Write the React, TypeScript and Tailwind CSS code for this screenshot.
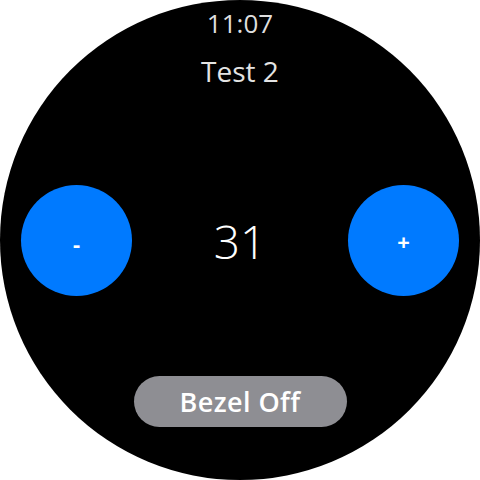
export default function App() {
  const font = { fontFamily: '"Open Sans", "Noto Sans", sans-serif' };

  return (
    <div className="w-[480px] h-[480px] bg-white" style={font}>
      <div className="w-[480px] h-[480px] rounded-full bg-black flex flex-col items-center">
        <div className="pt-[10px] text-[26px] leading-none text-[#dedede]">11:07</div>
        <div className="mt-[21px] text-[28px] leading-none text-[#e4e4e4]">Test 2</div>

        <div className="mt-[100px] w-full px-[21px] flex items-center justify-between">
          <button
            type="button"
            className="w-[111px] h-[111px] rounded-full bg-[#007aff] flex items-center justify-center text-white text-[22px] font-bold leading-none"
          >
            <span className="pt-[4px]">-</span>
          </button>
          <div className="text-[46px] font-light leading-none text-white">31</div>
          <button
            type="button"
            className="w-[111px] h-[111px] rounded-full bg-[#007aff] flex items-center justify-center text-white text-[22px] font-bold leading-none"
          >
            +
          </button>
        </div>

        <button
          type="button"
          className="mt-[80px] w-[213px] h-[51px] rounded-full bg-[#8e8e93] flex items-center justify-center text-white text-[27px] font-semibold leading-none tracking-[0.4px]"
        >
          Bezel Off
        </button>
      </div>
    </div>
  );
}
